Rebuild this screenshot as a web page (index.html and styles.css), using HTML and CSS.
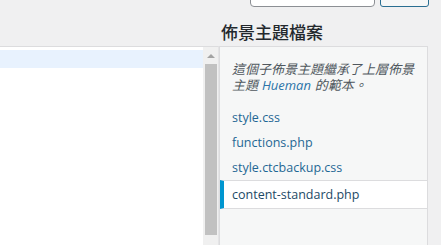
FILE: index.html
```html
<!doctype html>
<html lang="zh-Hant">
	<head>
		<meta charset="UTF-8" />
		<meta name="viewport" content="width=device-width, initial-scale=1.0" />
		<title>佈景主題編輯器</title>
		<link rel="stylesheet" href="styles.css">
	</head>

	<body>
		<div class="topbar">
			<input class="search-input" type="text" />
			<button class="search-button" type="button"></button>
		</div>

		<div class="layout">
			<div class="editor-col">
				<div class="editor">
					<div class="code-area">
						<div class="code-line active-line"></div>
					</div>
					<div class="scrollbar">
						<div class="scroll-arrow"></div>
						<div class="scroll-thumb"></div>
					</div>
				</div>
			</div>

			<div class="sidebar">
				<h2>佈景主題檔案</h2>
				<div class="files-panel">
					<p class="description">
						這個子佈景主題繼承了上層佈景主題 <a href="#">Hueman</a> 的範本。
					</p>
					<ul class="file-list">
						<li><a href="#">style.css</a></li>
						<li><a href="#">functions.php</a></li>
						<li><a href="#">style.ctcbackup.css</a></li>
						<li class="current-file"><a href="#">content-standard.php</a></li>
					</ul>
				</div>
			</div>
		</div>
	</body>
</html>
```

FILE: styles.css
```css
body {
	font-family: "Open Sans", "Noto Sans CJK TC", sans-serif;
	margin: 0;
	background: #f0f0f1;
	color: #3c434a;
	overflow: hidden;
	height: 245px;
}

/* search form, mostly scrolled off the top */
.topbar {
	height: 7px;
	overflow: hidden;
	display: flex;
	align-items: flex-end;
	padding-left: 250px;
	gap: 5px;
}

.search-input {
	width: 125px;
	height: 30px;
	box-sizing: border-box;
	border: 1px solid #8c8f94;
	border-radius: 4px;
	background: #fff;
	margin: 0;
	flex: none;
}

.search-button {
	width: 49px;
	height: 30px;
	box-sizing: border-box;
	border: 1px solid #2a6e91;
	border-radius: 3px;
	background: #f6f7f7;
	margin: 0;
	flex: none;
}

.layout {
	display: flex;
	align-items: flex-start;
}

/* left: code editor */
.editor-col {
	width: 219px;
	padding-top: 39px;
	flex: none;
}

.editor {
	display: flex;
	height: 205px;
	background: #fff;
	border-top: 1px solid #dcdcde;
	border-right: 1px solid #e4e4e6;
	box-sizing: border-box;
}

.code-area {
	flex: 1;
	padding-top: 3px;
}

.code-line {
	height: 18px;
}

.active-line {
	background: #e8f2fe;
}

.scrollbar {
	width: 15px;
	background: #f0f0f0;
	display: flex;
	flex-direction: column;
	align-items: center;
}

.scroll-arrow {
	width: 0;
	height: 0;
	margin-top: 7px;
	border-left: 4px solid transparent;
	border-right: 4px solid transparent;
	border-bottom: 4px solid #a3a3a3;
}

.scroll-thumb {
	width: 12px;
	height: 171px;
	margin-top: 6px;
	background: #c1c1c1;
}

/* right: theme files */
.sidebar {
	width: 209px;
	flex: none;
}

.sidebar h2 {
	font-family: "Noto Sans CJK TC", sans-serif;
	font-size: 17px;
	font-weight: 500;
	line-height: 22px;
	color: #23282d;
	margin: 14px 0 3px 2px;
}

.files-panel {
	background: #f6f7f7;
	border: 1px solid #dcdcde;
	border-bottom: none;
	height: 205px;
	box-sizing: border-box;
}

.description {
	font-family: "Noto Sans CJK TC", sans-serif;
	font-style: italic;
	font-size: 13px;
	line-height: 16px;
	color: #50575e;
	margin: 0;
	padding: 14px 6px 0 12px;
}

.description a {
	font-family: "Open Sans", sans-serif;
	color: #2b74a8;
	text-decoration: none;
	margin: 0 1px;
}

.file-list {
	list-style: none;
	margin: 12px 0 0;
	padding: 0;
}

.file-list li {
	font-size: 12.5px;
	line-height: 25px;
	padding-left: 12px;
}

.file-list a {
	color: #1f6794;
	text-decoration: none;
}

.file-list .current-file {
	padding: 1px 0 1px 8px;
	background: #fff;
	border: 1px solid #dcdcde;
	border-left: 4px solid #0096d0;
	margin-right: -1px;
}

.file-list .current-file a {
	color: #1d4966;
}
```
